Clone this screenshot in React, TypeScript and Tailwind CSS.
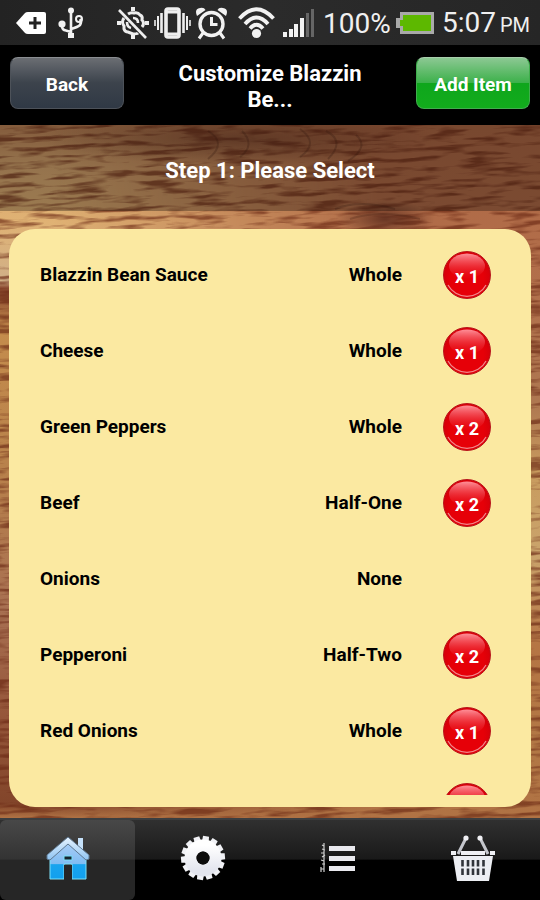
import React, { useState } from "react";

type Topping = { name: string; portion: string; badge: string };

const toppings: Topping[] = [
  { name: "Blazzin Bean Sauce", portion: "Whole", badge: "x 1" },
  { name: "Cheese", portion: "Whole", badge: "x 1" },
  { name: "Green Peppers", portion: "Whole", badge: "x 2" },
  { name: "Beef", portion: "Half-One", badge: "x 2" },
  { name: "Onions", portion: "None", badge: "" },
  { name: "Pepperoni", portion: "Half-Two", badge: "x 2" },
  { name: "Red Onions", portion: "Whole", badge: "x 1" },
];

function StatusBar() {
  return (
    <div className="flex h-[45px] shrink-0 items-center bg-linear-to-r from-[#232323] via-[#2b2b2b] to-[#262626] pr-[10px] pl-4 text-[#f0f0f0]">
      <svg width="30" height="24" viewBox="0 0 30 24" aria-hidden="true">
        <path d="M0 12 9 2Q10 1 12 1H28Q30 1 30 3V21Q30 23 28 23H12Q10 23 9 22Z" fill="#fff" />
        <path d="M19 6V18M13 12H25" stroke="#222" strokeWidth="3" />
      </svg>
      <svg className="ml-3" width="26" height="32" viewBox="0 0 26 32" aria-hidden="true" fill="none" stroke="#f2f2f2" strokeWidth="2.6">
        <path d="M13 3V29M4 17V19Q4 23 8 23.5L13 25M22 12Q24 15 22 18Q20 20 13 22" />
        <circle cx="13" cy="3.500" r="3" fill="#f2f2f2" stroke="none" />
        <circle cx="4" cy="17" r="3.600" fill="#f2f2f2" stroke="none" />
        <circle cx="21" cy="12" r="3" strokeWidth="2" />
        <rect x="10" y="26" width="6" height="5" fill="#f2f2f2" stroke="none" />
      </svg>
      <svg className="ml-8" width="34" height="34" viewBox="0 0 34 34" aria-hidden="true" fill="none" stroke="#eee">
        <path d="M17 1V5M17 29V33M1 17H5M29 17H33" strokeWidth="4" />
        <path d="M8 12Q5 16 8 20L8 23Q9 26 12 26L17 28Q21 28 22 27M12 8Q15 6 18 7Q22 6 24 9Q27 10 26 14Q29 17 26 21" strokeWidth="3" />
        <path d="M11 16Q11 21 15 22M17 12Q22 12 22 17" strokeWidth="2.600" />
        <path d="M3 4 30 32" strokeWidth="2.600" />
      </svg>
      <svg className="ml-1" width="37" height="32" viewBox="0 0 37 32" aria-hidden="true" fill="none" stroke="#eee">
        <rect x="12" y="2" width="13" height="28" rx="2" strokeWidth="3.600" />
        <path d="M12 5H25M12 27H25" strokeWidth="3" />
        <path d="M7.500 6V26M29.500 6V26" strokeWidth="2.600" />
        <path d="M4 9V23M33 9V23" strokeWidth="2" />
        <path d="M1 13V19M36 13V19" strokeWidth="1.600" />
      </svg>
      <svg className="ml-1" width="33" height="34" viewBox="0 0 33 34" aria-hidden="true" fill="none" stroke="#f2f2f2">
        <circle cx="16.500" cy="18" r="11.500" strokeWidth="3.400" />
        <path d="M16.500 11V18.500H22.500" strokeWidth="3" />
        <path d="M8 27 4 32.500M25 27 29 32.500" strokeWidth="3" />
        <path d="M2 10Q-1 3 5 2Q9 1 10.500 4ZM31 10Q34 3 28 2Q24 1 22.500 4Z" fill="#f2f2f2" stroke="none" />
      </svg>
      <svg className="ml-[10px]" width="37" height="32" viewBox="0 0 37 32" aria-hidden="true" fill="none" stroke="#f2f2f2" strokeWidth="3.800">
        <path d="M1.500 11.500Q18.500-7 35.500 11.500M7 17Q18.500 4 30 17M12 21.500Q18.500 14 25 21.500" />
        <circle cx="18.500" cy="26.500" r="4.600" fill="#f2f2f2" stroke="none" />
      </svg>
      <svg className="ml-2" width="32" height="28" viewBox="0 0 32 28" aria-hidden="true">
        <path d="M0 23H4V28H0ZM6 20H10V28H6ZM11 15H15V28H11ZM17 9H21V28H17Z" fill="#f2f2f2" />
        <path d="M23 4H26V28H23ZM28 0H31V28H28Z" fill="#666" />
      </svg>
      <span className="ml-2 pt-0.5 text-[28px] leading-8">100%</span>
      <svg className="ml-1" width="40" height="24" viewBox="0 0 40 24" aria-hidden="true">
        <path d="M5 1H39V23H5V17H1V7H5Z" fill="#a9a9a9" />
        <path d="M8 4H36V20H8V15H5V9H8Z" fill="#5db800" />
      </svg>
      <span className="ml-auto flex items-baseline gap-1 pt-0.5">
        <span className="text-[28px] leading-8">5:07</span>
        <span className="text-[20px]">PM</span>
      </span>
    </div>
  );
}

function WoodBackdrop() {
  return (
    <svg className="absolute inset-0 -z-10 h-full w-full" preserveAspectRatio="none" viewBox="0 0 540 693" aria-hidden="true">
      <defs>
        <linearGradient id="woodLeft" x1="0" y1="0" x2="0" y2="1">
          <stop offset="0" stopColor="#bd8457" />
          <stop offset="0.06" stopColor="#d6a66f" />
          <stop offset="0.14" stopColor="#e0b274" />
          <stop offset="0.225" stopColor="#d0b088" />
          <stop offset="0.235" stopColor="#8b4a30" />
          <stop offset="0.3" stopColor="#c48c4c" />
          <stop offset="0.5" stopColor="#b8814b" />
          <stop offset="0.7" stopColor="#a87052" />
          <stop offset="0.85" stopColor="#96573a" />
          <stop offset="0.98" stopColor="#82452a" />
          <stop offset="1" stopColor="#b07244" />
        </linearGradient>
        <linearGradient id="woodRight" x1="0" y1="0" x2="0" y2="1">
          <stop offset="0" stopColor="#ad6744" />
          <stop offset="0.2" stopColor="#b26e4a" />
          <stop offset="0.4" stopColor="#ae7750" />
          <stop offset="0.5" stopColor="#c89b5e" />
          <stop offset="0.62" stopColor="#caa46c" />
          <stop offset="0.75" stopColor="#b57544" />
          <stop offset="0.9" stopColor="#b27845" />
          <stop offset="1" stopColor="#b07244" />
        </linearGradient>
        <linearGradient id="fade">
          <stop offset="0.1" stopColor="#000" />
          <stop offset="0.7" stopColor="#fff" />
        </linearGradient>
        <mask id="rightSide">
          <rect width="540" height="693" fill="url(#fade)" />
        </mask>
        <radialGradient id="knot">
          <stop offset="0" stopColor="#4a1f14" stopOpacity="0.7" />
          <stop offset="1" stopColor="#4a1f14" stopOpacity="0" />
        </radialGradient>
        <filter id="grain" x="0" y="0" width="100%" height="100%" colorInterpolationFilters="sRGB">
          <feTurbulence type="fractalNoise" baseFrequency="0.025 0.2" numOctaves="3" seed="5" />
          <feColorMatrix values="0 0 0 0 0.42  0 0 0 0 0.16  0 0 0 0 0.08  4 0 0 0 -1.85" />
        </filter>
      </defs>
      <rect width="540" height="693" fill="url(#woodLeft)" />
      <rect width="540" height="693" fill="url(#woodRight)" mask="url(#rightSide)" />
      <g transform="rotate(-3 270 346)">
        <rect x="-40" y="-40" width="620" height="773" filter="url(#grain)" opacity="0.65" />
      </g>
      <ellipse cx="385" cy="94" rx="50" ry="18" fill="url(#knot)" />
      <ellipse cx="240" cy="14" rx="200" ry="26" fill="url(#knot)" opacity="0.6" />
      <g fill="none" stroke="#3f1c10" strokeOpacity="0.25" strokeWidth="2">
        <path d="M208 6Q228 18 208 34M242 6Q256 20 240 32M300 4Q320 18 300 32M326 6Q346 16 328 34M356 10Q370 22 348 36" />
        <path d="M335 84Q360 74 395 84M350 94Q380 84 420 94" />
      </g>
    </svg>
  );
}

function CountBadge({ text, label }: { text: string; label: string }) {
  return (
    <button
      type="button"
      aria-label={label}
      className="relative flex size-12 items-center justify-center rounded-full border border-[#b8141a] bg-radial-[at_50%_60%] from-[#e60008] from-50% to-[#c4000a] text-lg font-bold text-white"
    >
      <svg className="absolute inset-0 size-full" viewBox="0 0 46 46" aria-hidden="true">
        <defs>
          <linearGradient id="gloss" x1="0" y1="0" x2="0" y2="1">
            <stop offset="0" stopColor="#ff8f98" />
            <stop offset="1" stopColor="#e81a24" stopOpacity="0.1" />
          </linearGradient>
        </defs>
        <ellipse cx="23" cy="14" rx="18" ry="12.500" fill="url(#gloss)" />
        <path d="M4 33A21.500 21.500 0 0 0 42 33" fill="none" stroke="#f0888c" strokeWidth="1.200" />
      </svg>
      <span className="relative pt-1">{text}</span>
    </button>
  );
}

function HomeIcon() {
  return (
    <svg width="46" height="46" viewBox="0 0 46 46" aria-hidden="true">
      <defs>
        <linearGradient id="roof" x1="0" y1="0" x2="0" y2="1">
          <stop offset="0" stopColor="#e8f4ff" />
          <stop offset="1" stopColor="#8fc4f2" />
        </linearGradient>
        <linearGradient id="walls" x1="0" y1="0" x2="0" y2="1">
          <stop offset="0" stopColor="#a9cdf6" />
          <stop offset="0.58" stopColor="#7fbcf2" />
          <stop offset="0.6" stopColor="#18a4ee" />
          <stop offset="1" stopColor="#12a0ee" />
        </linearGradient>
      </defs>
      <path d="M5 22 23 8 41 22V44H27V29H19V44H5Z" fill="url(#walls)" stroke="#7be0f8" />
      <path d="M33 3H38V16L33 11Z" fill="#c5e1fa" />
      <path d="M23 2 44 20V24L41 25 23 9 5 25 2 24V20Z" fill="url(#roof)" stroke="#5f7890" />
      <path d="M19 21H27V25H19Z" fill="#15252e" stroke="#7be0f8" />
      <path d="M19 30H27V45H19Z" fill="#262626" />
    </svg>
  );
}

function GearIcon() {
  const teeth = Array.from({ length: 14 }, (_, i) => (i * 360) / 14 + 8);
  return (
    <svg width="46" height="46" viewBox="0 0 46 46" aria-hidden="true">
      <defs>
        <linearGradient id="gear" x1="0" y1="0" x2="0" y2="1">
          <stop offset="0" stopColor="#fff" />
          <stop offset="1" stopColor="#e3e5ee" />
        </linearGradient>
      </defs>
      {teeth.map((a) => (
        <path key={a} d="M20 1H26L26.500 8H19.500Z" fill="#f1f2f6" transform={`rotate(${a} 23 23)`} />
      ))}
      <circle cx="23" cy="23" r="12.500" fill="none" stroke="url(#gear)" strokeWidth="12" />
      <circle cx="23" cy="23" r="6.500" fill="#0c0c0c" />
    </svg>
  );
}

function ListIcon() {
  return (
    <svg width="36" height="32" viewBox="0 0 36 32" aria-hidden="true">
      <path d="M9 4H35V9H9ZM9 14H35V19H9ZM9 24H35V29H9Z" fill="#e9e9ee" />
      <path d="M4 1V30M1 30V25M1 27H4M2 22H5M1 18 4 19M2 15 5 13M1 11H4M2 7 5 8M2 3 4 4" stroke="#cfcfcf" strokeWidth="1.200" fill="none" />
    </svg>
  );
}

function BasketIcon() {
  return (
    <svg width="44" height="48" viewBox="0 0 44 48" aria-hidden="true">
      <path d="M15 4 7 20M29 4 37 20" stroke="#c4c6cc" strokeWidth="3" />
      <circle cx="15" cy="4" r="2.600" fill="#f0f0f4" />
      <circle cx="29" cy="4" r="2.600" fill="#f0f0f4" />
      <path d="M0 17H5V21H0ZM39 17H44V21H39ZM10 17H34V21H10Z" fill="#eff0f4" />
      <path d="M2 22H42L38 47H6Z" fill="#eceef3" />
      <path d="M11.500 26V41M17 26V41M22 26V41M27 26V41M32.500 26V41" stroke="#30343a" strokeWidth="2.600" strokeDasharray="6.500 2" />
    </svg>
  );
}

const tabs = [
  { label: "Home", icon: <HomeIcon /> },
  { label: "Settings", icon: <GearIcon /> },
  { label: "Orders", icon: <ListIcon /> },
  { label: "Basket", icon: <BasketIcon /> },
];

export default function App() {
  const [active, setActive] = useState(0);

  return (
    <div className="flex h-screen flex-col overflow-hidden bg-black font-['Roboto',sans-serif] text-white">
      <StatusBar />
      <header className="flex h-20 shrink-0 items-start justify-between bg-black px-[10px] pt-3">
        <button
          type="button"
          className="h-[52px] w-[114px] shrink-0 rounded-lg border border-[#4d5259] border-t-[#8b8e92] bg-linear-to-b from-[#6b6e73] via-[#3c434c] via-50% to-[#303945] pt-1 text-[19px] font-bold"
        >
          Back
        </button>
        <h1 className="line-clamp-2 w-52 pt-1 text-center text-[22px] leading-[26px] font-bold">
          Customize Blazzin Be...
        </h1>
        <button
          type="button"
          className="h-[52px] w-[114px] shrink-0 rounded-lg border border-[#3fae4c] border-t-[#a8cfac] bg-[linear-gradient(#8cc893,#3db14b_49%,#0fa61c_51%,#12ac1c)] pt-1 text-[19px] font-bold"
        >
          Add Item
        </button>
      </header>

      <main className="relative isolate flex min-h-0 flex-1 flex-col overflow-hidden">
        <WoodBackdrop />
        <h2 className="flex h-[86px] shrink-0 items-center justify-center bg-black/30 pt-1 text-[22px] font-bold">
          Step 1: Please Select
        </h2>
        <section className="mx-[9px] mt-[18px] mb-[11px] flex min-h-0 flex-1 flex-col rounded-[26px] bg-[#fbe9a1] pt-2 pb-3 text-black">
          <ul className="min-h-0 flex-1 overflow-y-auto pr-10 pl-[31px] [scrollbar-width:none]">
            {toppings.map((t) => (
              <li key={t.name} className="flex h-[76px] items-center text-[19px] font-bold">
                <span className="flex-1">{t.name}</span>
                <span>{t.portion}</span>
                <span className="ml-[41px] flex size-12 shrink-0">
                  {t.badge && <CountBadge text={t.badge} label={`${t.name} ${t.badge}`} />}
                </span>
              </li>
            ))}
            <li className="flex h-[76px] items-center justify-end">
              <CountBadge text="" label="More toppings" />
            </li>
          </ul>
        </section>
      </main>

      <nav className="grid h-[82px] shrink-0 grid-cols-4 border-t-2 border-[#3c3e40] bg-[linear-gradient(#303030,#191919_49%,#000_50%)]">
        {tabs.map((tab, i) => (
          <button
            key={tab.label}
            type="button"
            aria-label={tab.label}
            onClick={() => setActive(i)}
            className={
              i === active
                ? "flex items-center justify-center rounded-md bg-[linear-gradient(#484848,#333_49%,#262626_50%)] pb-1"
                : "flex items-center justify-center pb-1"
            }
          >
            {tab.icon}
          </button>
        ))}
      </nav>
    </div>
  );
}
